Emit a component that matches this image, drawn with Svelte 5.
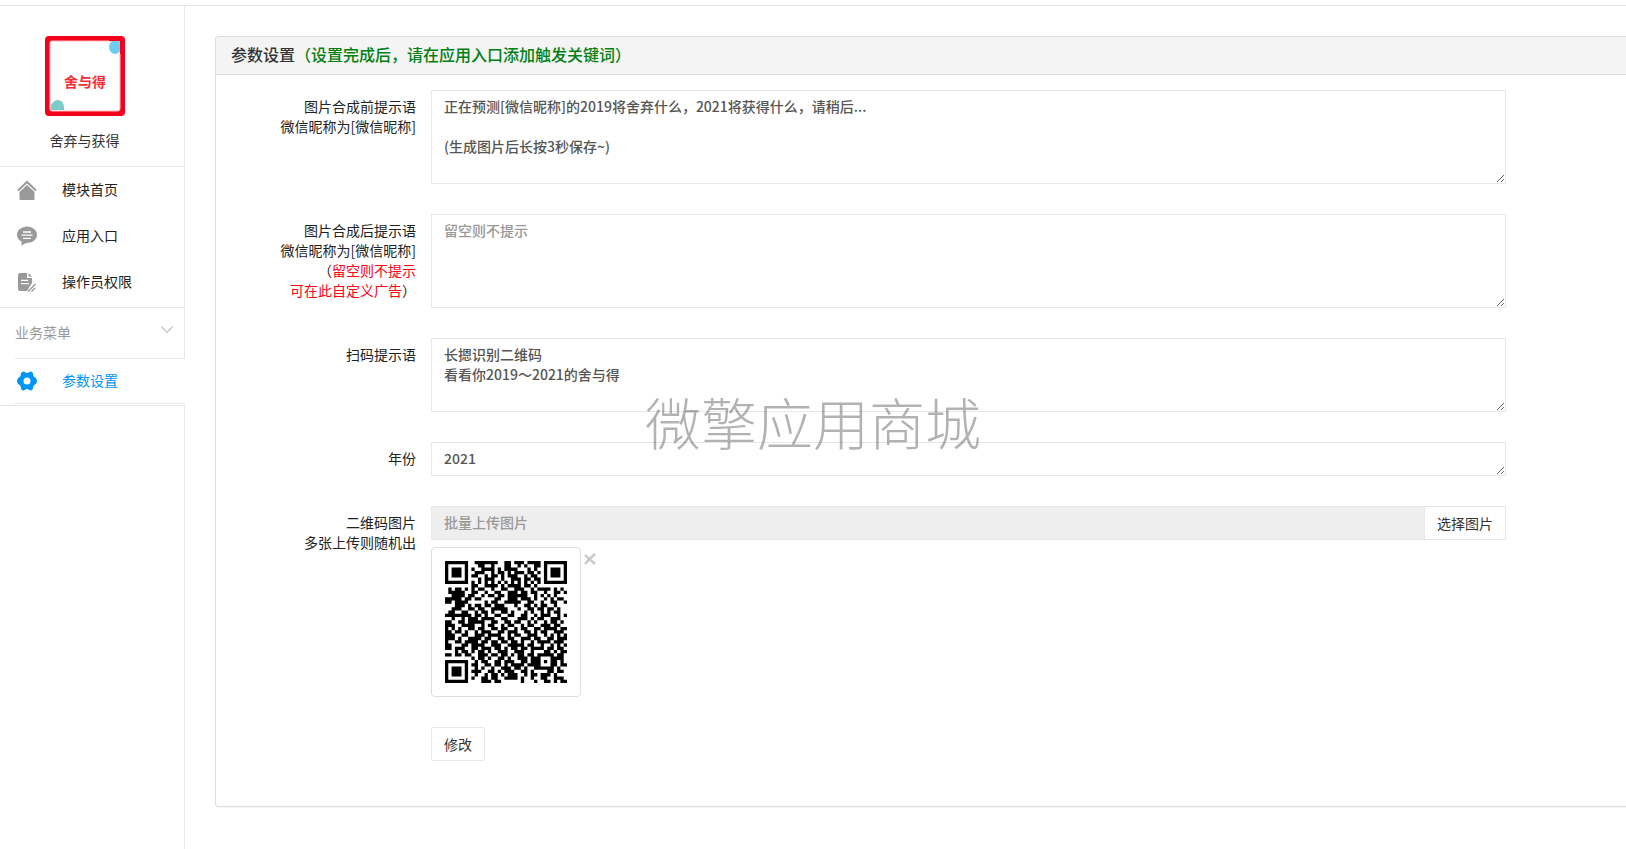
<script lang="ts">
  let beforeText = $state('正在预测[微信昵称]的2019将舍弃什么，2021将获得什么，请稍后...\n\n(生成图片后长按3秒保存~)')
  let afterText = $state('')
  let scanText = $state('长摁识别二维码\n看看你2019～2021的舍与得')
  let year = $state('2021')
  let hasImage = $state(true)

  const qr = [
    '#######..#######..##.###.####.#######',
    '#.....#...##..#...##..#.#..##.#.....#',
    '#.###.#.#..####.#.####...#.#..#.###.#',
    '#.###.#..###..#.##.#.###.##.#.#.###.#',
    '#.###.#.##..#.##.#.###..#.##..#.###.#',
    '#.....#...#.###..#..###.##.##.#.....#',
    '#######.#.#.#.#.#.#.#.#.#.#.#.#######',
    '........##..####.#.####.##.#.........',
    '.#.##.#.#.##..#..##..###..#.####.#.#.',
    '.#####..##..#..##..###.##.##..#..##.#',
    '..####.##..#.##.##.######..#.#.#.#...',
    '#####.##.##....##..###.###.#..#.#.##.',
    '##.####.....#.##..#####..##..#..##..#',
    '...###.#.##.##.###...#..##.#.##..#...',
    '..###..##.##..#####...#..##.##.##.#..',
    '.##..##..#.##.#..##.#...#.#..#.#.##..',
    '########.##.#..##..##..##..#.###..#.#',
    '..#..#.###.####..##...###.#.##..###..',
    '##..##.#####..##..##.##..#.#..#.##.#.',
    '###..####..#.##..#.##..#.##..###.##..',
    '#.#.#..##.##..##.##..#.##..##.####.##',
    '##.##.#..#.###..##.###..##.#.##..###.',
    '###..##..###.####..#.##..###..#.#.#.#',
    '###.#..####.##..##.##..###.##..##.###',
    '#..##.####.##.##.##.##.#..#.####.###.',
    '##...##.####..###..#####.##..#..#.#.#',
    '##.###..##.###.##.#.##.##.####.##.##.',
    '...#.##.#.##.#..###..###..#...##.#.##',
    '##.##.##..###.##.##.#.##.##.#####.##.',
    '........#.##.#..##.#..###.###...####.',
    '#######..#.##..##.###..##.###.#.##.#.',
    '#.....#.##..##.##.#.####.####...##.##',
    '#.###.#..#.#..#..###.##.#..######.#..',
    '#.###.#.###..##.#.###..##.#....##.##.',
    '#.###.#..#..#.##.#.###..#.##.###.#...',
    '#.....#.#..##.##..####.#..#..##..###.',
    '#######....###.##......#...#..##.#.##',
  ]

  // one path for all dark modules
  const qrPath = qr
    .flatMap((row, y) => [...row].map((c, x) => (c === '#' ? `M${x} ${y}h1v1h-1z` : '')))
    .join('')
</script>

<div class="page">
  <div class="topbar"></div>
  <div class="layout">
    <aside class="sidebar">
      <div class="module">
        <svg class="logo" viewBox="0 0 80 80" aria-hidden="true">
          <rect width="80" height="80" rx="4" fill="#f5001d" />
          <rect x="5" y="5" width="70" height="70" rx="2" fill="#fff" stroke="#fbb" />
          <ellipse cx="70" cy="11" rx="6" ry="7" fill="#6fcdf3" />
          <path d="M75 4v14h4V1H64v4h11z" fill="#f5001d" />
          <path d="M6 74v-5q3-5 7-5 6 1 6 7v3z" fill="#7ccbc9" />
          <text x="40" y="51" text-anchor="middle">舍与得</text>
        </svg>
        <div class="name">舍弃与获得</div>
      </div>

      <nav>
        <a class="item" href="#home">
          <svg viewBox="0 0 20 20" aria-hidden="true">
            <path d="M1 10.500 10 2l9 8.500" fill="none" stroke="currentColor" stroke-width="2" />
            <path d="m10 5 7.500 7v7q0 1-1 1h-13q-1 0-1-1v-7z" fill="currentColor" />
          </svg>
          模块首页
        </a>
        <a class="item" href="#entry">
          <svg viewBox="0 0 20 20" aria-hidden="true">
            <path d="M10 0.500c5.500 0 10 3.600 10 8.300s-4.500 8-9 8c-2 0-3.500.7-6.500 3v-4.300C1.700 14 0 11.700 0 8.800 0 4.100 4.500.5 10 .5z" fill="currentColor" />
            <path d="M6 6h8M4.500 9.200h11M6 12.400h8" stroke="#fff" stroke-width="1.300" />
          </svg>
          应用入口
        </a>
        <a class="item" href="#permission">
          <svg viewBox="0 0 20 20" aria-hidden="true">
            <path d="M3 1h7v5h5v5l-5 8H3q-2 0-2-2V3q0-2 2-2zM11.500 1 15 4.500h-3.500z" fill="currentColor" />
            <path d="M4 8.300h7M4 11.700h8" stroke="#fff" stroke-width="1.300" />
            <path d="m11 19.500 7.500-7.500M14.500 19.500l3.500-3.500" stroke="currentColor" stroke-width="1.400" />
          </svg>
          操作员权限
        </a>
      </nav>

      <button class="group" type="button">
        业务菜单
        <svg viewBox="0 0 12 8" aria-hidden="true">
          <path d="m0.500 0.500 5.500 6 5.500-6" fill="none" stroke="#999" />
        </svg>
      </button>
      <div class="submenu">
        <a class="item active" href="#settings">
          <svg viewBox="0 0 20 20" aria-hidden="true">
            <path fill-rule="evenodd" fill="currentColor" d="M5.500.8Q7 0 8.300 1.500q1.700 1.200 3.400 0Q13 0 14.500.8q2 1 1.700 3 0 2 2 2.700Q20 7.500 20 10t-1.800 3.500q-2 .7-2 2.700.3 2-1.700 3-1.500.8-2.800-.7-1.700-1.200-3.400 0-1.300 1.500-2.800.7-2-1-1.700-3 0-2-2-2.700Q0 12.500 0 10t1.800-3.500q2-.7 2-2.700-.3-2 1.700-3zM10 6.500a3.500 3.500 0 1 0 0 7 3.500 3.500 0 0 0 0-7z" />
          </svg>
          参数设置
        </a>
      </div>
      <div class="rest"></div>
    </aside>

    <main>
      <section class="panel">
        <h1>参数设置<span>（设置完成后，请在应用入口添加触发关键词）</span></h1>
        <form>
          <label for="before">图片合成前提示语<br />微信昵称为[微信昵称]</label>
          <textarea id="before" rows="4" spellcheck="false" bind:value={beforeText}></textarea>

          <label for="after">
            图片合成后提示语<br />微信昵称为[微信昵称]<br />（<em>留空则不提示<br />可在此自定义广告</em>）
          </label>
          <textarea id="after" rows="4" placeholder="留空则不提示" bind:value={afterText}></textarea>

          <label for="scan">扫码提示语</label>
          <textarea id="scan" rows="3" spellcheck="false" bind:value={scanText}></textarea>

          <label for="year">年份</label>
          <textarea id="year" rows="1" bind:value={year}></textarea>

          <label for="images">二维码图片<br />多张上传则随机出</label>
          <div>
            <div class="upload">
              <input id="images" type="text" placeholder="批量上传图片" readonly />
              <button class="btn" type="button">选择图片</button>
            </div>
            {#if hasImage}
              <div class="thumbs">
                <svg class="qr" viewBox="0 0 37 37" role="img" aria-label="二维码">
                  <path d={qrPath} fill="#000" />
                </svg>
                <button class="remove" type="button" aria-label="删除" onclick={() => (hasImage = false)}>
                  <svg viewBox="0 0 12 12" aria-hidden="true">
                    <path d="M1 2q3 3 10 9M11 1Q6 5 1 11" fill="none" stroke="#c8c8c8" stroke-width="2.400" />
                  </svg>
                </button>
              </div>
            {/if}
          </div>

          <div class="actions">
            <button class="btn" type="button">修改</button>
          </div>
        </form>
      </section>
    </main>
  </div>
  <div class="watermark" aria-hidden="true">微擎应用商城</div>
</div>

<style>
  :global(body) {
    margin: 0;
    background: #fff;
  }

  .page,
  .page * {
    box-sizing: border-box;
  }

  .page {
    position: relative;
    display: flex;
    flex-direction: column;
    min-height: 100vh;
    overflow: hidden;
    font: 14px/20px "Noto Sans CJK SC", "Liberation Sans", sans-serif;
    color: #333;
  }

  .topbar {
    height: 6px;
    border-bottom: 1px solid #e7e7eb;
  }

  .layout {
    flex: 1;
    display: grid;
    grid-template-columns: 185px minmax(0, 1fr);
  }

  /* Sidebar: every block draws its own right edge, the open item leaves a gap */
  .sidebar {
    display: flex;
    flex-direction: column;
  }

  .module,
  nav,
  .group,
  .rest {
    border-right: 1px solid #e7e7eb;
  }

  .module {
    display: flex;
    flex-direction: column;
    align-items: center;
    gap: 14px;
    padding: 30px 20px 16px 5px;
    border-bottom: 1px solid #e7e7eb;
  }
  .logo {
    flex: none;
    width: 80px;
    height: 80px;
    margin-right: -15px;
    margin-left: -15px;
  }
  .logo text {
    font-size: 14px;
    font-weight: 700;
    fill: #fb2a37;
  }

  .module {
    padding-right: 20px;
  }

  nav {
    border-bottom: 1px solid #e7e7eb;
    padding-bottom: 2px;
  }
  .item {
    display: flex;
    align-items: center;
    gap: 25px;
    height: 46px;
    padding: 0 0 3px 17px;
    color: #222;
    text-decoration: none;
  }
  .item svg {
    width: 20px;
    height: 20px;
    margin-top: 2px;
    color: #999;
  }
  .item.active,
  .item.active svg {
    color: #0095f6;
  }

  .group {
    display: flex;
    align-items: center;
    justify-content: space-between;
    height: 51px;
    margin-left: 15px;
    padding: 0 11px 2px 0;
    border-width: 0 1px 1px 0;
    border-style: solid;
    border-color: #e7e7eb;
    background: none;
    font: inherit;
    color: #999;
  }
  .group svg {
    width: 12px;
    height: 8px;
    margin-bottom: 4px;
  }

  .submenu {
    margin-left: 15px;
    border-bottom: 1px solid #e7e7eb;
  }
  .submenu .item {
    height: 44px;
    padding-left: 2px;
    padding-bottom: 2px;
  }
  .rest {
    flex: 1;
    margin-top: 1px;
    border-top: 1px solid #e7e7eb;
  }

  main {
    padding: 30px 0 42px 30px;
  }

  .panel {
    border: 1px solid #ddd;
    border-right: 0;
    border-radius: 4px 0 0 4px;
    box-shadow: 0 1px 1px rgba(0, 0, 0, 0.05);
  }
  .panel h1 {
    margin: 0;
    padding: 7px 15px 9px;
    border-bottom: 1px solid #ddd;
    border-radius: 4px 0 0;
    background: #f4f4f4;
    font-size: 16px;
    line-height: 21px;
    font-weight: 500;
  }
  .panel h1 span {
    color: #008010;
  }

  form {
    display: grid;
    grid-template-columns: 200px minmax(0, 1fr);
    column-gap: 15px;
    row-gap: 30px;
    padding: 15px 120px 45px 0;
  }
  label {
    height: 34px;
    padding-top: 6px;
    text-align: right;
    color: #222;
  }
  label em {
    font-style: normal;
    color: #ff0018;
  }

  textarea,
  .upload input {
    display: block;
    width: 100%;
    margin: 0;
    padding: 5px 12px 7px;
    border: 1px solid #e7e7eb;
    border-radius: 0;
    outline: 0;
    background: #fff;
    font: inherit;
    font-weight: 500;
    color: #555;
  }
  textarea {
    resize: vertical;
  }
  #year {
    overflow: hidden;
  }
  ::placeholder {
    color: #999;
    opacity: 1;
  }

  .upload {
    display: flex;
  }
  .upload input {
    flex: 1;
    min-width: 0;
    background: #eee;
  }
  .upload .btn {
    margin-left: -1px;
    border-radius: 0;
  }

  .btn {
    height: 34px;
    padding: 0 12px;
    border: 1px solid #e7e7eb;
    border-radius: 2px;
    background: #fff;
    font: inherit;
    color: #333;
    white-space: nowrap;
  }

  .thumbs {
    display: flex;
    align-items: flex-start;
    gap: 2px;
    margin-top: 7px;
  }
  .qr {
    width: 150px;
    height: 150px;
    padding: 13px;
    border: 1px solid #ddd;
    border-radius: 4px;
  }
  .remove {
    padding: 6px 0;
    border: 0;
    background: none;
    line-height: 0;
  }
  .remove svg {
    width: 14px;
    height: 12px;
  }

  .actions {
    grid-column: 2;
  }

  .watermark {
    position: absolute;
    top: 50vh;
    left: 50%;
    transform: translate(-50%, -50%);
    padding-bottom: 8px;
    font-size: 56px;
    line-height: 60px;
    font-weight: 300;
    color: rgba(0, 0, 0, 0.3);
    white-space: nowrap;
    pointer-events: none;
  }
</style>
